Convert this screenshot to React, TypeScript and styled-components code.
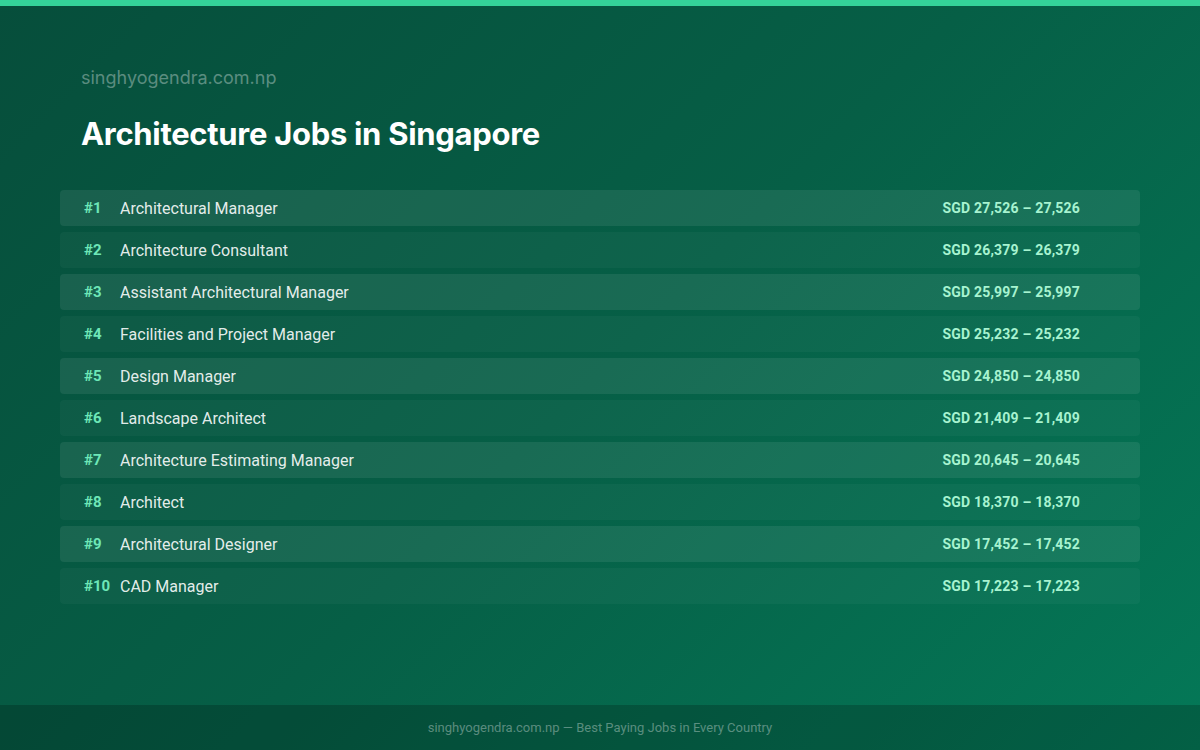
import React from "react";
import styled, { createGlobalStyle } from "styled-components";

const Global = createGlobalStyle`
  html, body { margin: 0; padding: 0; }
  body { font-family: Roboto, "Noto Sans", sans-serif; }
`;

const Page = styled.div`
  width: 1200px; height: 750px; position: relative; overflow: hidden;
  background: linear-gradient(135deg, #064e3b 0%, #065f46 50%, #047857 100%);
  display: flex; flex-direction: column;
`;
const TopBar = styled.div`height: 6px; background: #34d399; flex-shrink: 0;`;
const Main = styled.div`flex: 1; padding: 60px 60px 0 60px; display: flex; flex-direction: column;`;
const Site = styled.div`
  padding-left: 21px; font-family: Inter, sans-serif; font-size: 18px; line-height: 24px;
  color: rgba(255,255,255,0.35);
`;
const Title = styled.h1`
  margin: 24px 0 36px 21px; font-family: Inter, sans-serif; font-size: 31px; line-height: 40px;
  font-weight: 700; color: #fff; letter-spacing: -0.3px;
`;
const List = styled.div`display: flex; flex-direction: column; gap: 6px;`;
const Row = styled.div<{ $odd: boolean }>`
  height: 36px; border-radius: 4px; display: flex; align-items: center;
  padding: 0 60px 0 24px;
  background: ${p => (p.$odd ? "rgba(255,255,255,0.08)" : "rgba(255,255,255,0.035)")};
`;
const Rank = styled.span`width: 36px; font-size: 15px; font-weight: 700; color: #6ee7b7;`;
const Name = styled.span`flex: 1; font-size: 16px; color: rgba(255,255,255,0.9);`;
const Price = styled.span`font-size: 14px; font-weight: 700; color: #a7f3d0; letter-spacing: 0.2px;`;
const Footer = styled.div`
  height: 45px; background: rgba(0,0,0,0.2); display: flex; align-items: center; justify-content: center;
  font-size: 13px; color: rgba(255,255,255,0.35);
`;

const jobs: [string, string][] = [
  ["Architectural Manager", "SGD 27,526 – 27,526"],
  ["Architecture Consultant", "SGD 26,379 – 26,379"],
  ["Assistant Architectural Manager", "SGD 25,997 – 25,997"],
  ["Facilities and Project Manager", "SGD 25,232 – 25,232"],
  ["Design Manager", "SGD 24,850 – 24,850"],
  ["Landscape Architect", "SGD 21,409 – 21,409"],
  ["Architecture Estimating Manager", "SGD 20,645 – 20,645"],
  ["Architect", "SGD 18,370 – 18,370"],
  ["Architectural Designer", "SGD 17,452 – 17,452"],
  ["CAD Manager", "SGD 17,223 – 17,223"],
];

export default function App() {
  return (
    <Page>
      <Global />
      <TopBar />
      <Main>
        <Site>singhyogendra.com.np</Site>
        <Title>Architecture Jobs in Singapore</Title>
        <List>
          {jobs.map(([n, p], i) => (
            <Row key={n} $odd={i % 2 === 0}>
              <Rank>#{i + 1}</Rank>
              <Name>{n}</Name>
              <Price>{p}</Price>
            </Row>
          ))}
        </List>
      </Main>
      <Footer>singhyogendra.com.np — Best Paying Jobs in Every Country</Footer>
    </Page>
  );
}
